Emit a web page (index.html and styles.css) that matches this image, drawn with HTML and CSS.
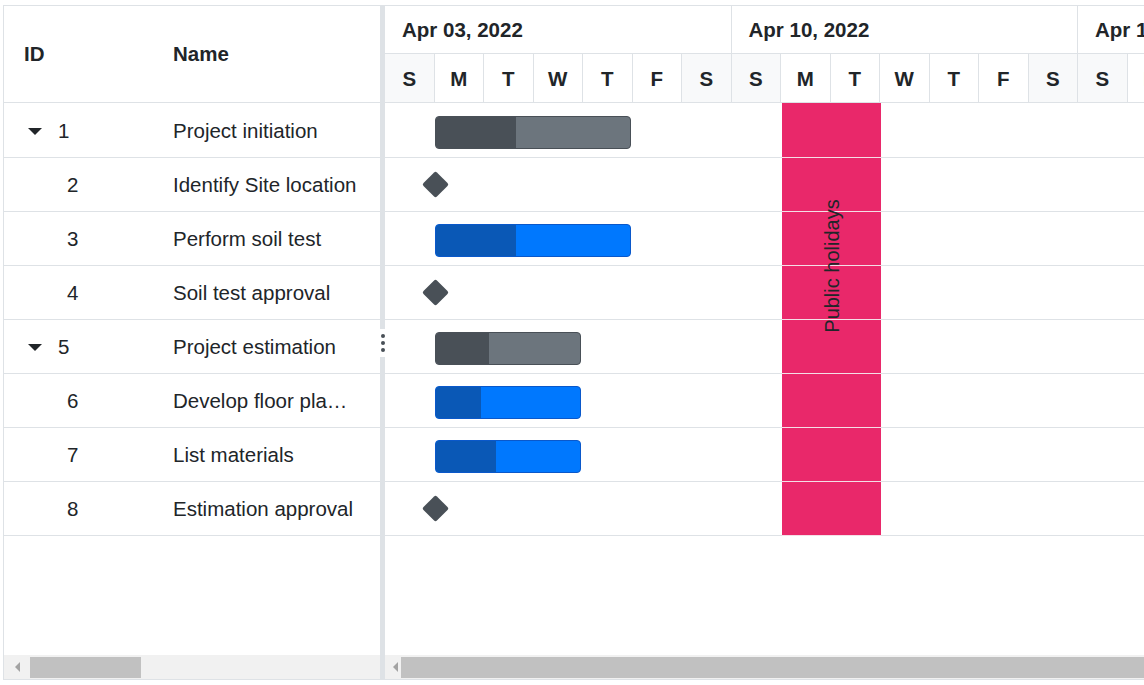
FILE: index.html
```html
<!DOCTYPE html>
<html>
<head>
<meta charset="utf-8">
<link rel="stylesheet" href="styles.css">
</head>
<body>
<div class="gantt">
  <div class="grid-pane">
    <div class="grid-header">
      <div class="gcol gid">ID</div>
      <div class="gcol gname">Name</div>
    </div>
    <div class="grid-body">
      <div class="grow"><div class="gcol gid parent"><span class="caret"></span>1</div><div class="gcol gname">Project initiation</div></div>
      <div class="grow"><div class="gcol gid child">2</div><div class="gcol gname">Identify Site location</div></div>
      <div class="grow"><div class="gcol gid child">3</div><div class="gcol gname">Perform soil test</div></div>
      <div class="grow"><div class="gcol gid child">4</div><div class="gcol gname">Soil test approval</div></div>
      <div class="grow"><div class="gcol gid parent"><span class="caret"></span>5</div><div class="gcol gname">Project estimation</div></div>
      <div class="grow"><div class="gcol gid child">6</div><div class="gcol gname">Develop floor plan for estimation</div></div>
      <div class="grow"><div class="gcol gid child">7</div><div class="gcol gname">List materials</div></div>
      <div class="grow"><div class="gcol gid child">8</div><div class="gcol gname">Estimation approval</div></div>
    </div>
    <div class="hscroll">
      <span class="sarrow"></span>
      <div class="thumb thumb-left"></div>
    </div>
  </div>
  <div class="splitter">
    <div class="handle"><i></i><i></i><i></i></div>
  </div>
  <div class="chart-pane">
    <div class="timeline">
      <div class="weeks">
        <div class="week">Apr 03, 2022</div>
        <div class="week">Apr 10, 2022</div>
        <div class="week">Apr 17, 2022</div>
      </div>
      <div class="days">
        <div class="day we">S</div><div class="day">M</div><div class="day">T</div><div class="day">W</div><div class="day">T</div><div class="day">F</div><div class="day we">S</div>
        <div class="day we">S</div><div class="day">M</div><div class="day">T</div><div class="day">W</div><div class="day">T</div><div class="day">F</div><div class="day we">S</div>
        <div class="day we">S</div><div class="day">M</div><div class="day">T</div><div class="day">W</div><div class="day">T</div><div class="day">F</div><div class="day we">S</div>
      </div>
    </div>
    <div class="chart-body">
      <div class="holiday"><span class="hlabel">Public holidays</span></div>
      <div class="crow"><div class="bar parent-bar" style="width:196px"><div class="prog" style="width:80px"></div></div></div>
      <div class="crow"><div class="milestone"></div></div>
      <div class="crow"><div class="bar child-bar" style="width:196px"><div class="prog" style="width:80px"></div></div></div>
      <div class="crow"><div class="milestone"></div></div>
      <div class="crow"><div class="bar parent-bar" style="width:146px"><div class="prog" style="width:53px"></div></div></div>
      <div class="crow"><div class="bar child-bar" style="width:146px"><div class="prog" style="width:45px"></div></div></div>
      <div class="crow"><div class="bar child-bar" style="width:146px"><div class="prog" style="width:60px"></div></div></div>
      <div class="crow"><div class="milestone"></div></div>
    </div>
    <div class="hscroll">
      <span class="sarrow sarrow-right-pane"></span>
      <div class="thumb thumb-right"></div>
    </div>
  </div>
</div>
</body>
</html>
```
FILE: styles.css
```css
html, body {
  margin: 0;
  padding: 0;
  background: #fff;
  overflow: hidden;
  width: 1144px;
  height: 685px;
}
body {
  font-family: "Liberation Sans", Arial, sans-serif;
  color: #212529;
}
.gantt {
  box-sizing: border-box;
  margin: 5px 0 0 3px;
  width: 1440px;
  height: 675px;
  border: 1px solid #dee2e6;
  display: flex;
  background: #fff;
}
.grid-pane {
  width: 376px;
  flex: none;
  display: flex;
  flex-direction: column;
}
.grid-header {
  box-sizing: border-box;
  height: 97px;
  border-bottom: 1px solid #dee2e6;
  display: flex;
  align-items: center;
  font-weight: bold;
  font-size: 20.5px;
}
.gcol {
  box-sizing: border-box;
  white-space: nowrap;
  overflow: hidden;
  text-overflow: ellipsis;
}
.gid {
  width: 150px;
  padding-left: 20px;
  flex: none;
}
.gname {
  width: 226px;
  padding-left: 19px;
  padding-right: 22px;
  flex: none;
}
.grid-body {
  flex: 1;
  font-size: 20.5px;
  padding-top: 1px;
}
.grow {
  box-sizing: border-box;
  height: 54px;
  border-bottom: 1px solid #dee2e6;
  display: flex;
  align-items: center;
}
.gid.parent {
  padding-left: 24px;
  display: flex;
  align-items: center;
}
.gid.child {
  padding-left: 63px;
}
.caret {
  width: 0;
  height: 0;
  border-left: 7px solid transparent;
  border-right: 7px solid transparent;
  border-top: 7px solid #212529;
  margin-right: 16px;
  margin-top: 1px;
}
.hscroll {
  height: 24px;
  background: #f1f1f1;
  display: flex;
  align-items: center;
  flex: none;
}
.sarrow {
  width: 0;
  height: 0;
  border-top: 5px solid transparent;
  border-bottom: 5px solid transparent;
  border-right: 5px solid #a3a3a3;
  margin-left: 11px;
  margin-right: 10px;
}
.sarrow-right-pane {
  margin-left: 8px;
  margin-right: 3px;
}
.thumb {
  height: 21px;
  background: #c1c1c1;
  margin-top: 1px;
}
.thumb-left {
  width: 111px;
}
.thumb-right {
  flex: 1;
}
.splitter {
  width: 5px;
  flex: none;
  background: #dee2e6;
  display: flex;
  align-items: center;
  justify-content: center;
}
.handle {
  height: 28px;
  width: 5px;
  background: #fff;
  display: flex;
  flex-direction: column;
  align-items: center;
  justify-content: center;
  gap: 3px;
}
.handle i {
  display: block;
  width: 4px;
  height: 4px;
  border-radius: 50%;
  background: #495057;
}
.chart-pane {
  width: 1040px;
  flex: none;
  display: flex;
  flex-direction: column;
  overflow: hidden;
}
.timeline {
  box-sizing: border-box;
  height: 97px;
  border-bottom: 1px solid #dee2e6;
  font-weight: bold;
  font-size: 20.5px;
}
.weeks {
  box-sizing: border-box;
  height: 48px;
  border-bottom: 1px solid #dee2e6;
  display: grid;
  grid-template-columns: repeat(3, 346.5px);
}
.week {
  box-sizing: border-box;
  border-right: 1px solid #dee2e6;
  padding-left: 17px;
  display: flex;
  align-items: center;
  white-space: nowrap;
  overflow: hidden;
}
.days {
  height: 48px;
  display: grid;
  grid-template-columns: repeat(21, 49.5px);
}
.day {
  box-sizing: border-box;
  border-right: 1px solid #dee2e6;
  display: flex;
  align-items: center;
  justify-content: center;
  padding-top: 1px;
}
.day.we {
  background: #f8f9fa;
}
.chart-body {
  flex: 1;
  position: relative;
  padding-top: 1px;
}
.holiday {
  position: absolute;
  left: 397px;
  top: 0;
  width: 99px;
  height: 433px;
  background: linear-gradient(to bottom, #e9286a 0, #e9286a 54px, #f4dfe6 54px, #f4dfe6 55px, transparent 55px),
    repeating-linear-gradient(to bottom, #e9286a 0, #e9286a 53px, #f4dfe6 53px, #f4dfe6 54px);
  background-position: 0 0, 0 1px;
}
.hlabel {
  position: absolute;
  left: 50%;
  top: 163px;
  transform: translate(-50%, -50%) rotate(-90deg);
  white-space: nowrap;
  font-size: 20px;
  color: #212529;
}
.crow {
  box-sizing: border-box;
  height: 54px;
  border-bottom: 1px solid #dee2e6;
  display: flex;
  align-items: center;
}
.bar {
  box-sizing: border-box;
  height: 33px;
  margin-left: 50px;
  margin-top: 4px;
  border-radius: 4px;
  overflow: hidden;
  position: relative;
  z-index: 1;
}
.parent-bar {
  background: #6c757d;
  border: 1px solid #495057;
}
.parent-bar .prog {
  background: #495057;
}
.child-bar {
  background: #0078fe;
  border: 1px solid #0a58ca;
}
.child-bar .prog {
  background: #0a58b6;
}
.prog {
  height: 100%;
}
.milestone {
  width: 19px;
  height: 19px;
  background: #495057;
  transform: rotate(45deg);
  margin-left: 41px;
  border-radius: 2px;
  position: relative;
  z-index: 1;
}
```
